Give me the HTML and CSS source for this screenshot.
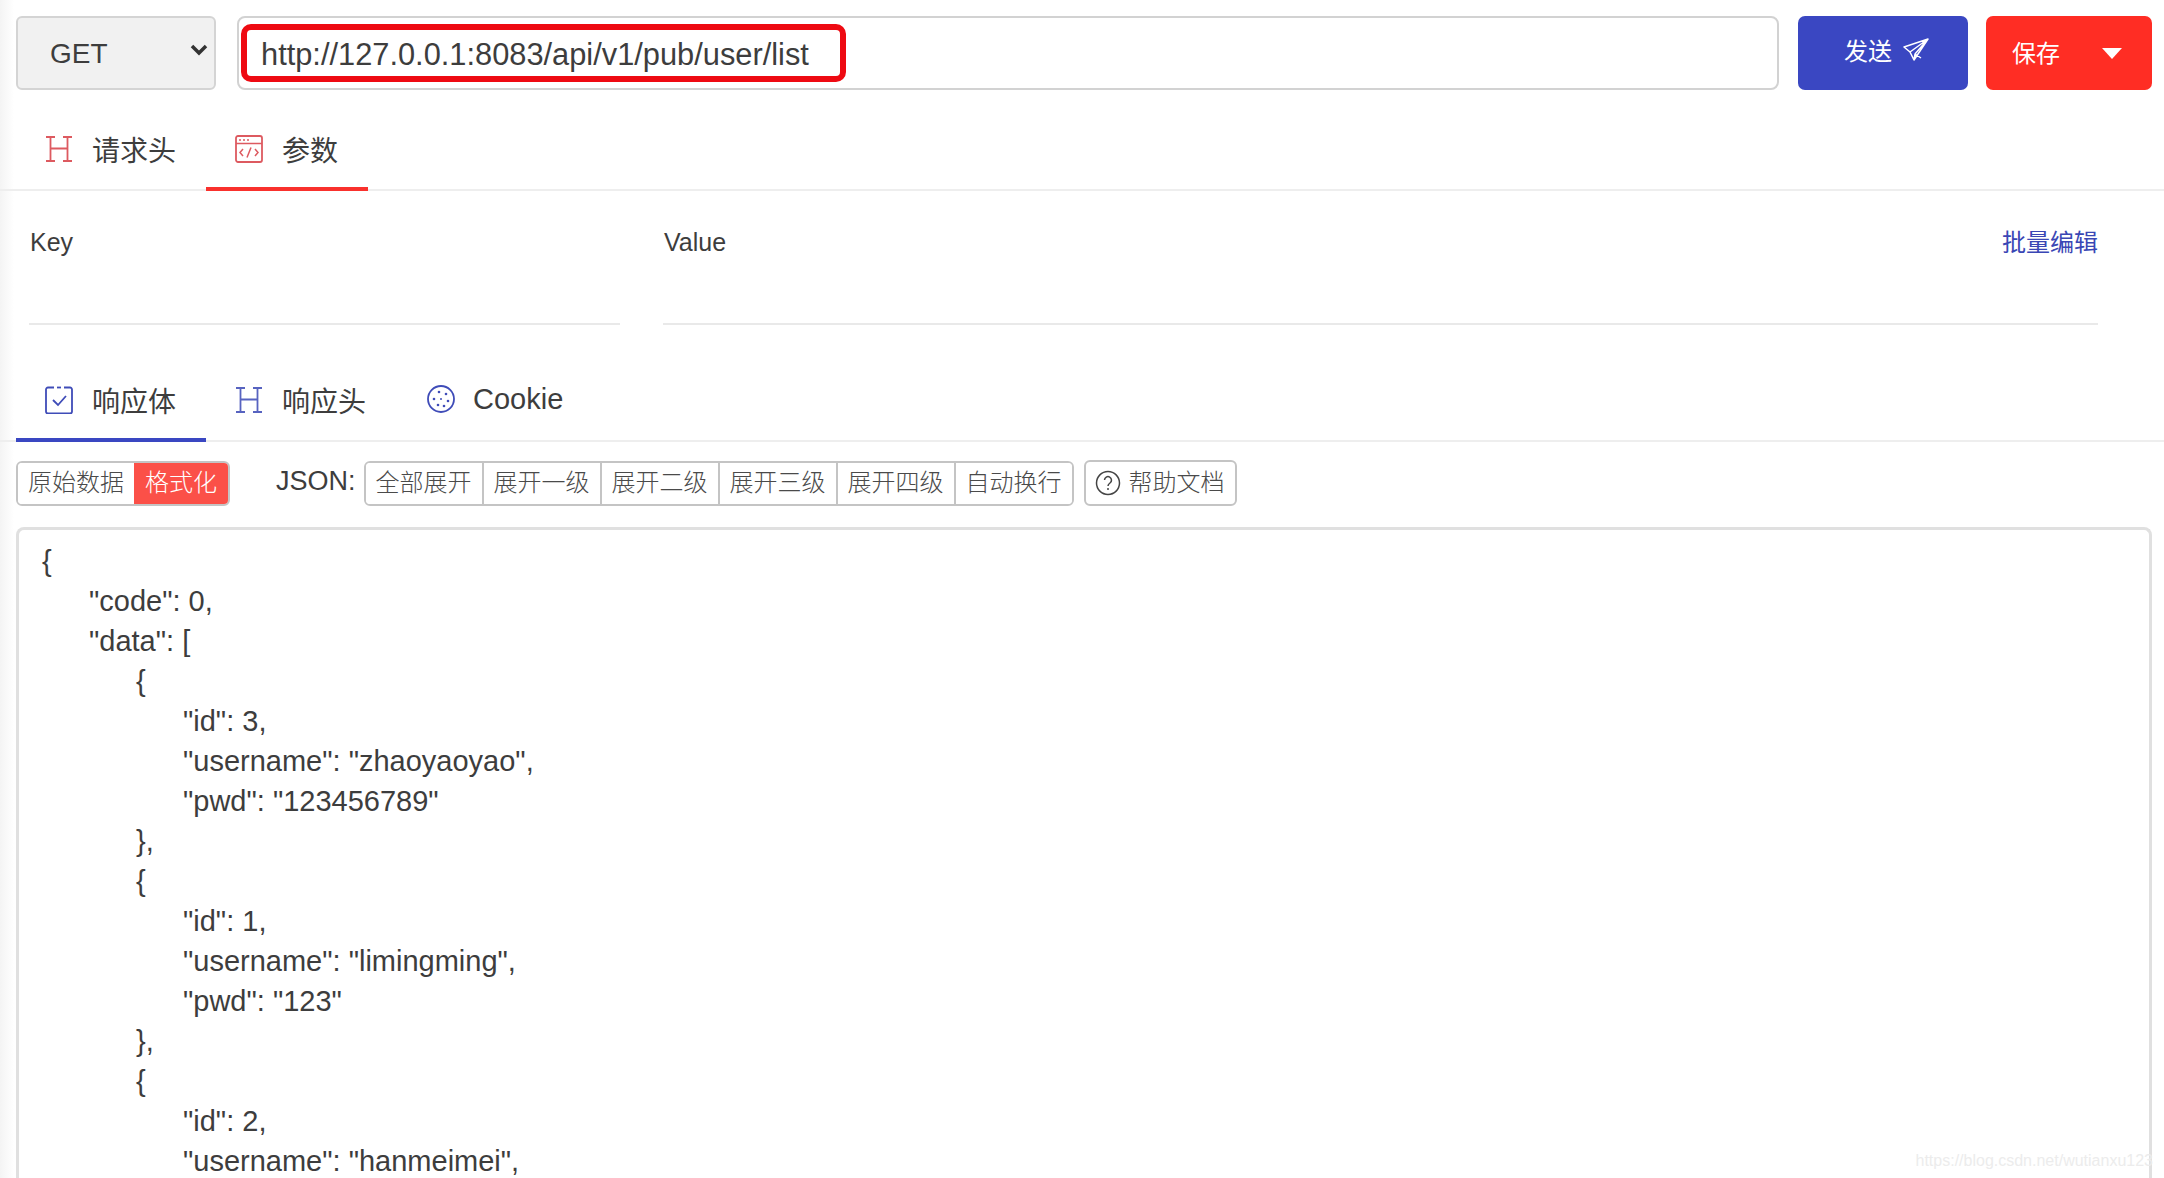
FILE: index.html
```html
<!DOCTYPE html>
<html lang="zh-CN">
<head>
<meta charset="utf-8">
<title>API</title>
<link rel="stylesheet" href="styles.css">
</head>
<body>
<div class="request-bar">
  <div class="method">
    <select class="method-select"><option>GET</option></select>
    <svg class="chevron" viewBox="0 0 18 12"><path d="M2 2l7 7 7-7" fill="none" stroke="#333" stroke-width="3.500"/></svg>
  </div>
  <div class="url-field"><div class="url-mark">http://127.0.0.1:8083/api/v1/pub/user/list</div></div>
  <button class="btn btn-send">发送
    <svg class="plane" viewBox="0 0 26 24"><path d="M25 1L1 9l6 5 4 8 14-21zM7 14L25 1M11 22l1-6 6 4M12 16L25 1" fill="none" stroke="#fff" stroke-width="1.500" stroke-linejoin="round"/></svg>
  </button>
  <button class="btn btn-save"><span>保存</span><i class="caret"></i></button>
</div>

<div class="tabs tabs-red">
  <div class="tab">
    <svg class="tab-icon" viewBox="0 0 28 28"><path d="M1 2h9M5.500 2v24M1 26h9M18 2h9M22.500 2v24M18 26h9M5.500 13.500h17" fill="none" stroke="#dd5a60" stroke-width="1.800"/></svg>
    请求头
  </div>
  <div class="tab tab-active">
    <svg class="tab-icon" viewBox="0 0 28 28"><rect x="1" y="1" width="26" height="26" rx="2" fill="none" stroke="#dd5a60" stroke-width="1.800"/><path d="M1 8.500h26M8 14l-3 3.500 3 3.500M20 14l3 3.500-3 3.500M16 12.500l-4 10" fill="none" stroke="#dd5a60" stroke-width="1.500"/><path d="M4 5h2M8 5h2M12 5h2" stroke="#dd5a60" stroke-width="1.600"/></svg>
    参数
  </div>
</div>

<div class="params">
  <div class="param param-key"><span class="param-label">Key</span></div>
  <div class="param param-value"><span class="param-label">Value</span><a class="bulk">批量编辑</a></div>
</div>

<div class="tabs tabs-blue">
  <div class="tab tab-active">
    <svg class="tab-icon" viewBox="0 0 28 28"><path d="M9 1.500H3a2 2 0 0 0-2 2v22a2 2 0 0 0 2 2h22a2 2 0 0 0 2-2v-22a2 2 0 0 0-2-2h-6" fill="none" stroke="#3f4cb8" stroke-width="1.800"/><path d="M12 1.500h4" stroke="#3f4cb8" stroke-width="1.800"/><path d="M8 14l5 5 8-9" fill="none" stroke="#3f4cb8" stroke-width="1.800"/></svg>
    响应体
  </div>
  <div class="tab">
    <svg class="tab-icon" viewBox="0 0 28 28"><path d="M1 2h9M5.500 2v24M1 26h9M18 2h9M22.500 2v24M18 26h9M5.500 13.500h17" fill="none" stroke="#5763c0" stroke-width="1.800"/></svg>
    响应头
  </div>
  <div class="tab tab-cookie">
    <svg class="tab-icon" viewBox="0 0 28 28"><circle cx="14" cy="14" r="13" fill="none" stroke="#3f4cb8" stroke-width="1.800"/><g fill="#3f4cb8"><circle cx="12" cy="7" r="1.300"/><circle cx="19" cy="9" r="1.300"/><circle cx="7" cy="14" r="1.300"/><circle cx="14" cy="14" r="1"/><circle cx="21" cy="16" r="1.300"/><circle cx="11" cy="20" r="1.300"/><circle cx="17" cy="21" r="1.300"/></g></svg>
    Cookie
  </div>
</div>

<div class="toolbar">
  <div class="group group-mode">
    <button class="tool">原始数据</button>
    <button class="tool tool-on">格式化</button>
  </div>
  <span class="json-label">JSON:</span>
  <div class="group">
    <button class="tool">全部展开</button>
    <button class="tool">展开一级</button>
    <button class="tool">展开二级</button>
    <button class="tool">展开三级</button>
    <button class="tool">展开四级</button>
    <button class="tool">自动换行</button>
  </div>
  <button class="help">
    <svg class="help-icon" viewBox="0 0 26 26"><circle cx="13" cy="13" r="11.500" fill="none" stroke="#444" stroke-width="1.500"/><path d="M9.500 10a3.500 3.500 0 1 1 5.500 3c-1.300.9-2 1.500-2 3" fill="none" stroke="#444" stroke-width="1.500"/><circle cx="13" cy="19" r="1" fill="#444"/></svg>
    帮助文档
  </button>
</div>

<div class="code">
  <div class="line">{</div>
  <div class="line lv1">"code": 0,</div>
  <div class="line lv1">"data": [</div>
  <div class="line lv2">{</div>
  <div class="line lv3">"id": 3,</div>
  <div class="line lv3">"username": "zhaoyaoyao",</div>
  <div class="line lv3">"pwd": "123456789"</div>
  <div class="line lv2">},</div>
  <div class="line lv2">{</div>
  <div class="line lv3">"id": 1,</div>
  <div class="line lv3">"username": "limingming",</div>
  <div class="line lv3">"pwd": "123"</div>
  <div class="line lv2">},</div>
  <div class="line lv2">{</div>
  <div class="line lv3">"id": 2,</div>
  <div class="line lv3">"username": "hanmeimei",</div>
</div>
<div class="watermark">https://blog.csdn.net/wutianxu123</div>
</body>
</html>
```
FILE: styles.css
```css
* { box-sizing: border-box; }
html, body { margin: 0; height: 1178px; overflow: hidden; background: #fff; }
body {
  position: relative;
  padding: 16px 12px 0 16px;
  font-family: "Liberation Sans", "Noto Sans CJK SC", sans-serif;
  color: #3d3d3d;
  background: linear-gradient(to right, #f4f4f4, #fff 14px);
}
button { font-family: inherit; cursor: pointer; }

.request-bar { display: flex; height: 74px; }
.method { position: relative; width: 200px; margin-right: 21px; }
.method-select {
  appearance: none;
  width: 100%;
  height: 100%;
  padding: 0 0 0 32px;
  border: 2px solid #d4d4d4;
  border-radius: 6px;
  background: #f1f1f1;
  color: #3d3d3d;
  font: 28px "Liberation Sans", sans-serif;
}
.chevron { position: absolute; right: 8px; top: 28px; width: 18px; height: 12px; }
.url-field {
  flex: 1;
  margin-right: 19px;
  padding: 6px 2px;
  border: 2px solid #d2d2d2;
  border-radius: 8px;
}
.url-mark {
  width: 605px;
  height: 100%;
  padding-left: 14px;
  border: 6px solid #ee0a12;
  border-radius: 10px;
  font-size: 30.800px;
  line-height: 49px;
}
.btn {
  display: flex;
  align-items: center;
  height: 74px;
  border: 0;
  border-radius: 7px;
  color: #fff;
  font-size: 24px;
}
.btn-send { width: 170px; margin-right: 18px; padding: 0 0 7px 46px; gap: 11px; background: #3a47c2; }
.plane { width: 26px; height: 24px; }
.btn-save { width: 166px; padding: 0 0 4px 26px; background: #ff2d24; }
.caret {
  margin-left: 42px;
  margin-top: 4px;
  border-style: solid;
  border-width: 11px 10px 0;
  border-color: #fff transparent transparent;
}

.tabs { display: flex; margin-left: -16px; margin-right: -12px; padding-left: 16px; border-bottom: 2px solid #eee; }
.tabs-red { margin-top: 25px; height: 76px; }
.tab {
  display: flex;
  align-items: center;
  gap: 19px;
  height: 76px;
  padding: 0 30px 4px 29px;
  border-bottom: 4px solid transparent;
  font-size: 28px;
  margin-bottom: -2px;
}
.tabs-red .tab-active { border-bottom-color: #f9312d; }
.tabs-blue .tab-active { border-bottom-color: #3a47c2; }
.tab-icon { width: 28px; height: 28px; flex: none; }

.params { display: flex; margin: 0 54px 0 13px; gap: 43px; height: 134px; }
.param {
  display: flex;
  justify-content: space-between;
  height: 134px;
  padding: 36px 0 0 1px;
  border-bottom: 2px solid #e9e9e9;
  font-size: 25px;
  line-height: 30px;
}
.param-key { width: 591px; }
.param-value { flex: 1; }
.bulk { margin-top: 4px; color: #3a47b5; font-size: 24px; line-height: 24px; }

.tabs-blue { margin-top: 40px; height: 77px; }
.tabs-blue .tab { height: 77px; }
.tabs-blue .tab-cookie { padding-left: 31px; gap: 18px; font-size: 29px; }
.tab-cookie .tab-icon { margin-top: -2px; }

.toolbar { display: flex; align-items: center; margin-top: 18px; height: 46px; }
.group { display: flex; height: 45px; border: 2px solid #c4c4c4; border-radius: 6px; overflow: hidden; }
.group-mode { margin-right: 46px; }
.tool {
  width: 118px;
  padding: 0 0 7px;
  border: 0;
  border-right: 2px solid #c4c4c4;
  background: #fff;
  color: #4a4a4a;
  font-size: 24px;
  font-weight: 300;
}
.tool:last-child { width: 116px; border-right: 0; }
.group-mode .tool:first-child { width: 116px; border-right: 0; }
.group-mode .tool-on { width: 94px; background: #fb5048; color: #fff; }
.json-label { margin-right: 8px; padding-bottom: 3px; font-size: 27px; font-weight: 300; }
.help {
  display: flex;
  align-items: center;
  gap: 8px;
  width: 153px;
  height: 46px;
  margin-left: 10px;
  padding: 0 0 5px 9px;
  border: 2px solid #c4c4c4;
  border-radius: 6px;
  background: #fff;
  color: #4a4a4a;
  font-size: 24px;
  font-weight: 300;
}
.help-icon { width: 26px; height: 26px; margin-top: 5px; }

.code {
  height: 660px;
  margin: 21px 0 0;
  padding: 11px 0 0 23px;
  border: 3px solid #e0e0e0;
  border-bottom: 0;
  border-radius: 8px 8px 0 0;
  font-size: 29px;
  line-height: 40px;
}
.line { height: 40px; white-space: nowrap; }
.lv1 { padding-left: 47px; }
.lv2 { padding-left: 94px; }
.lv3 { padding-left: 141px; }
.watermark {
  position: absolute;
  right: 11px;
  bottom: 8px;
  color: #ececec;
  font-size: 16px;
}
```
